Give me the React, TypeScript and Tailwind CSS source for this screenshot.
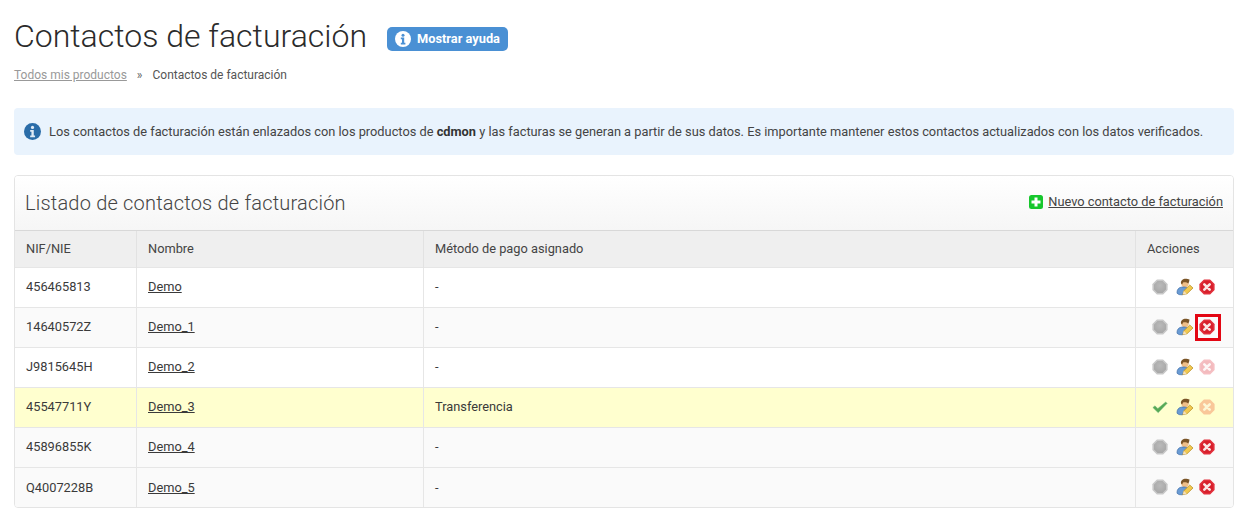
import React from "react";

const Info = ({ size, bg, fg }: { size: number; bg: string; fg: string }) => (
  <svg width={size} height={size} viewBox="0 0 16 16" className="shrink-0">
    <circle cx="8" cy="8" r="8" fill={bg} />
    <circle cx="8" cy="4.2" r="1.5" fill={fg} />
    <path d="M5.8 6.6h3.4v5.2h1.2v1.6H5.8v-1.6h1.2V8.2H5.8z" fill={fg} />
  </svg>
);

const Octagon = ({ fill, stroke }: { fill: string; stroke: string }) => (
  <polygon points="5.2,1.2 10.8,1.2 14.8,5.2 14.8,10.8 10.8,14.8 5.2,14.8 1.2,10.8 1.2,5.2" fill={fill} stroke={stroke} strokeWidth="1.6" strokeLinejoin="round" />
);

const Gray = () => (
  <svg width="16" height="16" viewBox="0 0 16 16">
    <defs>
      <radialGradient id="grayFill" cx="50%" cy="40%" r="65%">
        <stop offset="0%" stopColor="#bababa" />
        <stop offset="100%" stopColor="#a4a4a4" />
      </radialGradient>
    </defs>
    <Octagon fill="url(#grayFill)" stroke="#c8c8c8" />
  </svg>
);

const Del = ({ faded, warm }: { faded?: boolean; warm?: boolean }) => (
  <svg width="16" height="16" viewBox="0 0 16 16" opacity={faded ? 0.3 : 1}>
    <Octagon fill={warm ? "#ee4a20" : "#d8202c"} stroke={warm ? "#ee4a20" : "#e2303c"} />
    <path d="M5.3 5.3l5.4 5.4M10.7 5.3l-5.4 5.4" stroke="#fbe4e4" strokeWidth="2.6" strokeLinecap="round" />
  </svg>
);

const Check = () => (
  <svg width="16" height="16" viewBox="0 0 16 16">
    <path d="M0.8 8.6l2.2-1.8 2.8 2.8L13.6 3l1.7 1.3-9.1 9.5z" fill="#56a956" stroke="#8ac68a" strokeWidth="0.5" />
  </svg>
);

const UserEdit = () => (
  <svg width="18" height="18" viewBox="0 0 18 18">
    <circle cx="9" cy="5.6" r="3.7" fill="#efbf88" />
    <path d="M5 5.6C4.4 2 7.8 0.2 10.6 0.8l2.9 0.6-.4 2.4-.8 1.8C11 4.2 8.4 4 7 4.6L6.2 6.4z" fill="#7a5426" />
    <path d="M1 15.2c-.2-3.6 1.6-5.6 4.2-6 2.6-.4 5-.2 6.4.8l-5 6.8-3.6-.2z" fill="#6a9bd4" stroke="#3f6fa8" strokeWidth="0.7" />
    <path d="M6.8 16.6l1-3.8 6-5.8 3.2 3-6 5.8z" fill="#f2c94e" stroke="#b58a20" strokeWidth="0.7" />
    <path d="M6.8 16.6l1-3.8 2.9 2.9z" fill="#f4dfbd" />
  </svg>
);

const Plus = () => (
  <svg width="14" height="14" viewBox="0 0 14 14" className="shrink-0">
    <rect width="14" height="14" rx="2.5" fill="#17c72d" />
    <path d="M5.5 2.5h3v3h3v3h-3v3h-3v-3h-3v-3h3z" fill="#fff" />
  </svg>
);

type Row = { nif: string; name: string; pay: string; status?: boolean; faded?: boolean; boxed?: boolean; hi?: boolean; alt?: boolean };

const rows: Row[] = [
  { nif: "456465813", name: "Demo", pay: "-" },
  { nif: "14640572Z", name: "Demo_1", pay: "-", boxed: true, alt: true },
  { nif: "J9815645H", name: "Demo_2", pay: "-", faded: true },
  { nif: "45547711Y", name: "Demo_3", pay: "Transferencia", status: true, faded: true, hi: true },
  { nif: "45896855K", name: "Demo_4", pay: "-", alt: true },
  { nif: "Q4007228B", name: "Demo_5", pay: "-", alt: true },
];

const th = "h-[36px] px-[11.5px] first:pl-[11px] text-left font-normal border-r border-[#e2e2e2] last:border-r-0";
const td = "h-[40px] px-[11.5px] first:pl-[11px] border-r border-t border-[#e6e6e6] last:border-r-0";

export default function App() {
  return (
    <div className="h-[521px] overflow-hidden bg-white pl-[14px] pr-[11px] pt-[15px] text-[12.8px] text-[#3a3a3a] font-['Roboto',sans-serif]">
      <div className="flex items-center h-[41px]">
        <h1 className="text-[32px] leading-[41px] mt-[1px] font-light text-[#2b2b2b]">Contactos de facturación</h1>
        <span className="ml-[20px] mt-[6px] flex items-center gap-[6px] h-[24px] rounded-[5px] bg-[#4a90d4] pl-[8px] pr-[8.5px] text-[12.8px] font-bold text-white">
          <Info size={16} bg="#ffffff" fg="#4a90d4" />
          Mostrar ayuda
        </span>
      </div>
      <div className="flex items-center mt-[11px] h-[16px] text-[12px]">
        <a className="underline text-[#999]">Todos mis productos</a>
        <span className="mx-[10px] text-[#666]">»</span>
        <span className="text-[#555]">Contactos de facturación</span>
      </div>
      <div className="mt-[25px] flex items-center gap-[8px] h-[47px] rounded-[4px] bg-[#e9f3fd] pl-[10px] text-[12.8px] text-[#444]">
        <Info size={17} bg="#2a6ca8" fg="#dfeaf5" />
        <span>
          Los contactos de facturación están enlazados con los productos de <b className="text-[#333]">cdmon</b> y las facturas se generan a partir de sus datos. Es importante mantener estos contactos actualizados con los datos verificados.
        </span>
      </div>
      <div className="mt-[20px] rounded-[4px] border border-[#e4e4e4] overflow-hidden">
        <div className="flex items-center justify-between h-[55px] pl-[10px] pr-[10px] bg-gradient-to-b from-white to-[#f6f6f6] border-b border-[#d8d8d8]">
          <h2 className="text-[20px] font-light text-[#444] tracking-[0.2px]">Listado de contactos de facturación</h2>
          <a className="flex items-center gap-[5px] -mt-[3px] text-[12.8px] text-[#444] underline"><Plus />Nuevo contacto de facturación</a>
        </div>
        <table className="w-full table-fixed border-collapse">
          <colgroup>
            <col className="w-[121px]" />
            <col className="w-[287px]" />
            <col />
            <col className="w-[98px]" />
          </colgroup>
          <thead>
            <tr className="bg-[#efefef] text-[#444]">
              <th className={th}>NIF/NIE</th>
              <th className={th}>Nombre</th>
              <th className={th}>Método de pago asignado</th>
              <th className={th}>Acciones</th>
            </tr>
          </thead>
          <tbody>
            {rows.map((r) => (
              <tr key={r.nif} className={r.hi ? "bg-[#ffffcf]" : r.alt ? "bg-[#fafafa]" : "bg-white"}>
                <td className={td}>{r.nif}</td>
                <td className={td}><a className="underline">{r.name}</a></td>
                <td className={td}>{r.pay}</td>
                <td className={td}>
                  <div className="flex items-center pl-[4.5px]">
                    {r.status ? <Check /> : <Gray />}
                    <span className="ml-[8px] flex"><UserEdit /></span>
                    <span className="relative flex ml-[5px]">
                      <Del faded={r.faded} warm={r.hi} />
                      {r.boxed && <span className="absolute -left-[4px] -top-[5px] w-[26px] h-[27px] border-[3px] border-[#e30613]" />}
                    </span>
                  </div>
                </td>
              </tr>
            ))}
          </tbody>
        </table>
      </div>
    </div>
  );
}
